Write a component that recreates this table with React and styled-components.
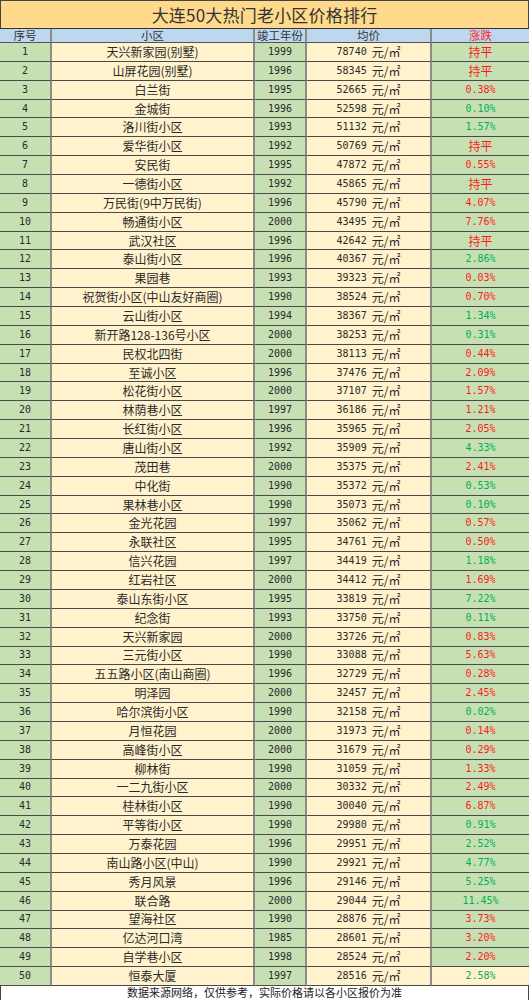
import React from "react";
import styled, { createGlobalStyle } from "styled-components";

const GlobalStyle = createGlobalStyle`
  html, body { margin: 0; padding: 0; background: #ffffff; }
  * { box-sizing: border-box; }
`;

const CJK = `"Noto Sans CJK SC", "Noto Sans", sans-serif`;
const NUM = `"DejaVu Sans Mono", "Liberation Mono", "Noto Sans CJK SC", monospace`;

const GREEN = "#c6e0b4";
const CREAM = "#fff2cc";
const RED = "#ff1a1a";
const UP = "#00b050";

const Sheet = styled.div`
  width: 529px;
  display: grid;
  grid-template-columns: 52px 203px 52px 125px 97px;
  grid-template-rows: 29px 14px repeat(50, 18.86px) 14px;
  color: #2a2a2a;
`;

const Title = styled.div`
  grid-column: 1 / -1;
  display: flex;
  align-items: center;
  justify-content: center;
  background: #ffd98c;
  border-top: 1px solid #444;
  border-left: 1px solid #444;
  border-right: 1px solid #444;
  border-bottom: 1px solid #333;
  font-family: ${CJK};
  font-size: 17px;
  color: #333;
  letter-spacing: 0.2px;
`;

const Head = styled.div`
  display: flex;
  align-items: center;
  justify-content: center;
  background: #bdd7ee;
  border-right: ${(p) => (p.$last ? "0" : "2px solid #8c8c8c")};
  border-bottom: 1px solid #555;
  font-family: ${CJK};
  font-size: 11.5px;
  line-height: 13px;
  color: ${(p) => p.$color || "#333"};
  white-space: nowrap;
`;

const Cell = styled.div`
  display: flex;
  align-items: center;
  justify-content: center;
  background: ${(p) => p.$bg};
  border-right: ${(p) => (p.$last ? "0" : "2px solid #8c8c8c")};
  border-bottom: 1px solid #4a4a4a;
  font-family: ${(p) => (p.$mono ? NUM : CJK)};
  font-size: ${(p) => (p.$mono ? "10px" : "12px")};
  color: ${(p) => p.$color || "#2a2a2a"};
  white-space: nowrap;
  line-height: 1;
`;

const Unit = styled.span`
  font-family: ${CJK};
  font-size: 12px;
  margin-left: 5px;
`;

const Footer = styled.div`
  grid-column: 1 / -1;
  display: flex;
  align-items: center;
  justify-content: center;
  background: #ffffff;
  border-left: 1px solid #444;
  border-right: 1px solid #444;
  font-family: ${CJK};
  font-size: 11px;
  line-height: 13px;
  color: #222;
`;

const rows = [
  ["天兴新家园(别墅)", 1999, 78740, "持平", "r"],
  ["山屏花园(别墅)", 1996, 58345, "持平", "r"],
  ["白兰街", 1995, 52665, "0.38%", "r"],
  ["金城街", 1996, 52598, "0.10%", "g"],
  ["洛川街小区", 1993, 51132, "1.57%", "g"],
  ["爱华街小区", 1992, 50769, "持平", "r"],
  ["安民街", 1995, 47872, "0.55%", "r"],
  ["一德街小区", 1992, 45865, "持平", "r"],
  ["万民街(9中万民街)", 1996, 45790, "4.07%", "r"],
  ["畅通街小区", 2000, 43495, "7.76%", "r"],
  ["武汉社区", 1996, 42642, "持平", "r"],
  ["泰山街小区", 1996, 40367, "2.86%", "g"],
  ["果园巷", 1993, 39323, "0.03%", "r"],
  ["祝贺街小区(中山友好商圈)", 1990, 38524, "0.70%", "r"],
  ["云山街小区", 1994, 38367, "1.34%", "g"],
  ["新开路128-136号小区", 2000, 38253, "0.31%", "g"],
  ["民权北四街", 2000, 38113, "0.44%", "r"],
  ["至诚小区", 1996, 37476, "2.09%", "r"],
  ["松花街小区", 2000, 37107, "1.57%", "r"],
  ["林荫巷小区", 1997, 36186, "1.21%", "r"],
  ["长红街小区", 1996, 35965, "2.05%", "r"],
  ["唐山街小区", 1992, 35909, "4.33%", "g"],
  ["茂田巷", 2000, 35375, "2.41%", "r"],
  ["中化街", 1990, 35372, "0.53%", "g"],
  ["果林巷小区", 1990, 35073, "0.10%", "g"],
  ["金光花园", 1997, 35062, "0.57%", "r"],
  ["永联社区", 1995, 34761, "0.50%", "r"],
  ["信兴花园", 1997, 34419, "1.18%", "g"],
  ["红岩社区", 2000, 34412, "1.69%", "r"],
  ["泰山东街小区", 1995, 33819, "7.22%", "g"],
  ["纪念街", 1993, 33750, "0.11%", "g"],
  ["天兴新家园", 2000, 33726, "0.83%", "r"],
  ["三元街小区", 1990, 33088, "5.63%", "r"],
  ["五五路小区(南山商圈)", 1996, 32729, "0.28%", "r"],
  ["明泽园", 2000, 32457, "2.45%", "r"],
  ["哈尔滨街小区", 1990, 32158, "0.02%", "g"],
  ["月恒花园", 2000, 31973, "0.14%", "r"],
  ["高峰街小区", 2000, 31679, "0.29%", "r"],
  ["柳林街", 1990, 31059, "1.33%", "r"],
  ["一二九街小区", 2000, 30332, "2.49%", "r"],
  ["桂林街小区", 1990, 30040, "6.87%", "r"],
  ["平等街小区", 1990, 29980, "0.91%", "g"],
  ["万泰花园", 1996, 29951, "2.52%", "g"],
  ["南山路小区(中山)", 1990, 29921, "4.77%", "g"],
  ["秀月风景", 1996, 29146, "5.25%", "g"],
  ["联合路", 2000, 29044, "11.45%", "g"],
  ["望海社区", 1990, 28876, "3.73%", "r"],
  ["亿达河口湾", 1985, 28601, "3.20%", "r"],
  ["自学巷小区", 1998, 28524, "2.20%", "r"],
  ["恒泰大厦", 1997, 28516, "2.58%", "g"],
];

export default function App() {
  return (
    <>
      <GlobalStyle />
      <Sheet>
        <Title>大连50大热门老小区价格排行</Title>
        <Head>序号</Head>
        <Head>小区</Head>
        <Head>竣工年份</Head>
        <Head>均价</Head>
        <Head $last $color="#ff1a1a">涨跌</Head>
        {rows.map(([name, year, price, change, dir], i) => {
          const isFlat = change === "持平";
          const lastRow = i === rows.length - 1;
          return (
            <React.Fragment key={i}>
              <Cell $bg={GREEN} $mono>{i + 1}</Cell>
              <Cell $bg={CREAM}>{name}</Cell>
              <Cell $bg={GREEN} $mono>{year}</Cell>
              <Cell $bg={CREAM} $mono>
                {price}
                <Unit>元/㎡</Unit>
              </Cell>
              <Cell
                $bg={lastRow ? CREAM : GREEN}
                $last
                $mono={!isFlat}
                $color={dir === "g" ? UP : RED}
              >
                {change}
              </Cell>
            </React.Fragment>
          );
        })}
        <Footer>数据来源网络，仅供参考，实际价格请以各小区报价为准</Footer>
      </Sheet>
    </>
  );
}
